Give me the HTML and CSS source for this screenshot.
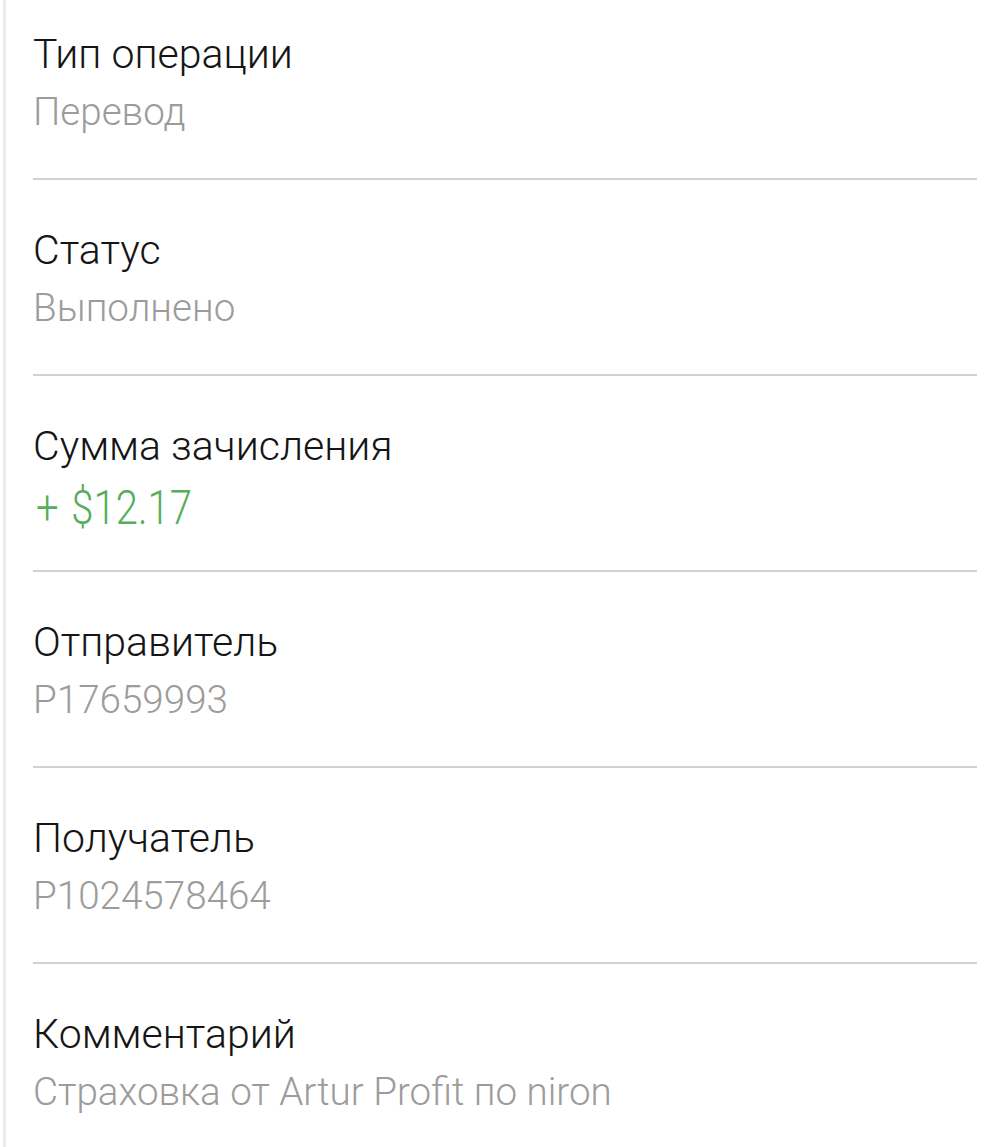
FILE: index.html
```html
<!DOCTYPE html>
<html>
  <head>
    <meta charset="utf-8">
    <title>Детали операции</title>
    <meta name="viewport" content="width=device-width, initial-scale=1">
    <link rel="stylesheet" href="styles.css">
  </head>
  <body>
    <section class="details">
      <div class="field field--first">
        <div class="field__label">Тип операции</div>
        <div class="field__value">Перевод</div>
      </div>

      <div class="field">
        <div class="field__label">Статус</div>
        <div class="field__value">Выполнено</div>
      </div>

      <div class="field">
        <div class="field__label">Сумма зачисления</div>
        <div class="field__value"><span class="amount">+ $12.17</span></div>
      </div>

      <div class="field">
        <div class="field__label">Отправитель</div>
        <div class="field__value">P17659993</div>
      </div>

      <div class="field">
        <div class="field__label">Получатель</div>
        <div class="field__value">P1024578464</div>
      </div>

      <div class="field field--last">
        <div class="field__label">Комментарий</div>
        <div class="field__value">Страховка от Artur Profit по niron</div>
      </div>
    </section>
  </body>
</html>
```

FILE: styles.css
```css
/* Base */
* {
  box-sizing: border-box;
}

html {
  font-family: Roboto, "Noto Sans", sans-serif;
  height: 100%;
}

body {
  background-color: #fff;
  color: #151515;
  height: 100%;
  margin: 0;
}

/* Modules */
.details {
  border-left: 3px solid #ebebeb;
  margin-left: 3px;
  min-height: 100%;
  padding: 0 18px 0 27px;
}

.field {
  border-bottom: 2px solid #d2d2d2;
  padding: 42px 0 38px;
}

.field--first {
  padding-top: 26px;
}

.field--last {
  border-bottom: 0;
}

.field__label,
.field__value {
  font-size: 38.6px;
  font-weight: 300;
  line-height: 57px;
  white-space: nowrap;
}

.field__label {
  font-size: 41px;
}

.field__value {
  color: #9c9c9c;
}

/* The amount is drawn a bit taller than the other values */
.amount {
  color: #56ad5b;
  display: inline-block;
  font-size: 40px;
  padding-left: 3px;
  transform: scaleY(1.18);
  transform-origin: 0 5px;
  word-spacing: 3px;
}
```
